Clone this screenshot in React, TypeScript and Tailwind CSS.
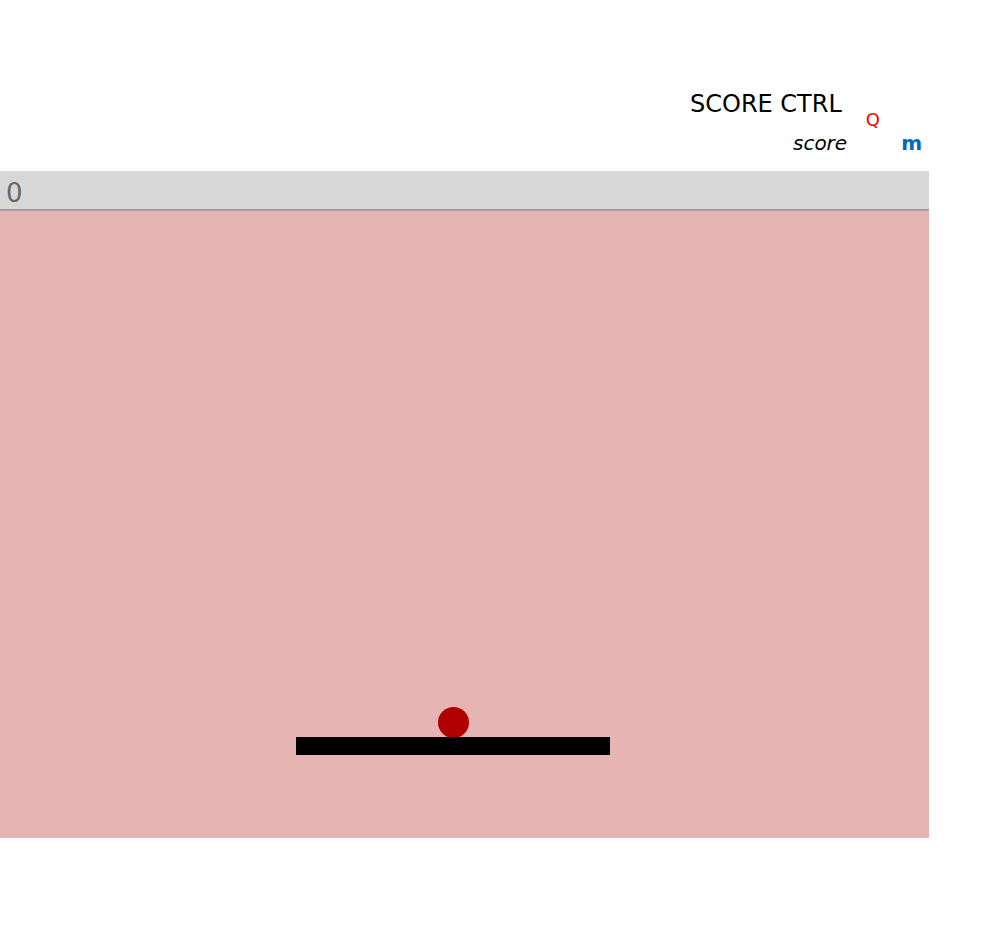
import React from "react";

export default function App() {
  return (
    <div className="w-[1008px] h-[929px] bg-white" style={{ fontFamily: '"DejaVu Sans", sans-serif' }}>
      <div className="h-[171px] w-[928px] pt-[90px] flex flex-col">
        <div className="flex justify-end items-start pr-[48px] h-[40px]">
          <span className="text-[24px] leading-[28px] text-black whitespace-nowrap">SCORE CTRL</span>
          <span className="text-[18px] leading-[21px] text-[#ff0000] ml-[24px] mt-[19px]">Q</span>
        </div>
        <div className="flex justify-end items-start pr-[6px] mt-[2px]">
          <span className="text-[20px] leading-[23px] italic text-black">score</span>
          <span className="text-[20px] leading-[23px] font-bold text-[#0066cc] ml-[54px]">m</span>
        </div>
      </div>
      <div className="w-[929px] h-[40px] bg-[#d7d7d7] border-b-2 border-[#a0a0a0] pl-[6px] pt-[7px]">
        <span className="text-[26px] leading-[30px] text-[#666666]">0</span>
      </div>
      <div className="relative w-[929px] h-[627px] bg-[#e7b4b4]">
        <div className="absolute left-[438px] top-[496px] w-[31px] h-[31px] rounded-full bg-[#b00000]" />
        <div className="absolute left-[296px] top-[526px] w-[314px] h-[18px] bg-black" />
      </div>
    </div>
  );
}
